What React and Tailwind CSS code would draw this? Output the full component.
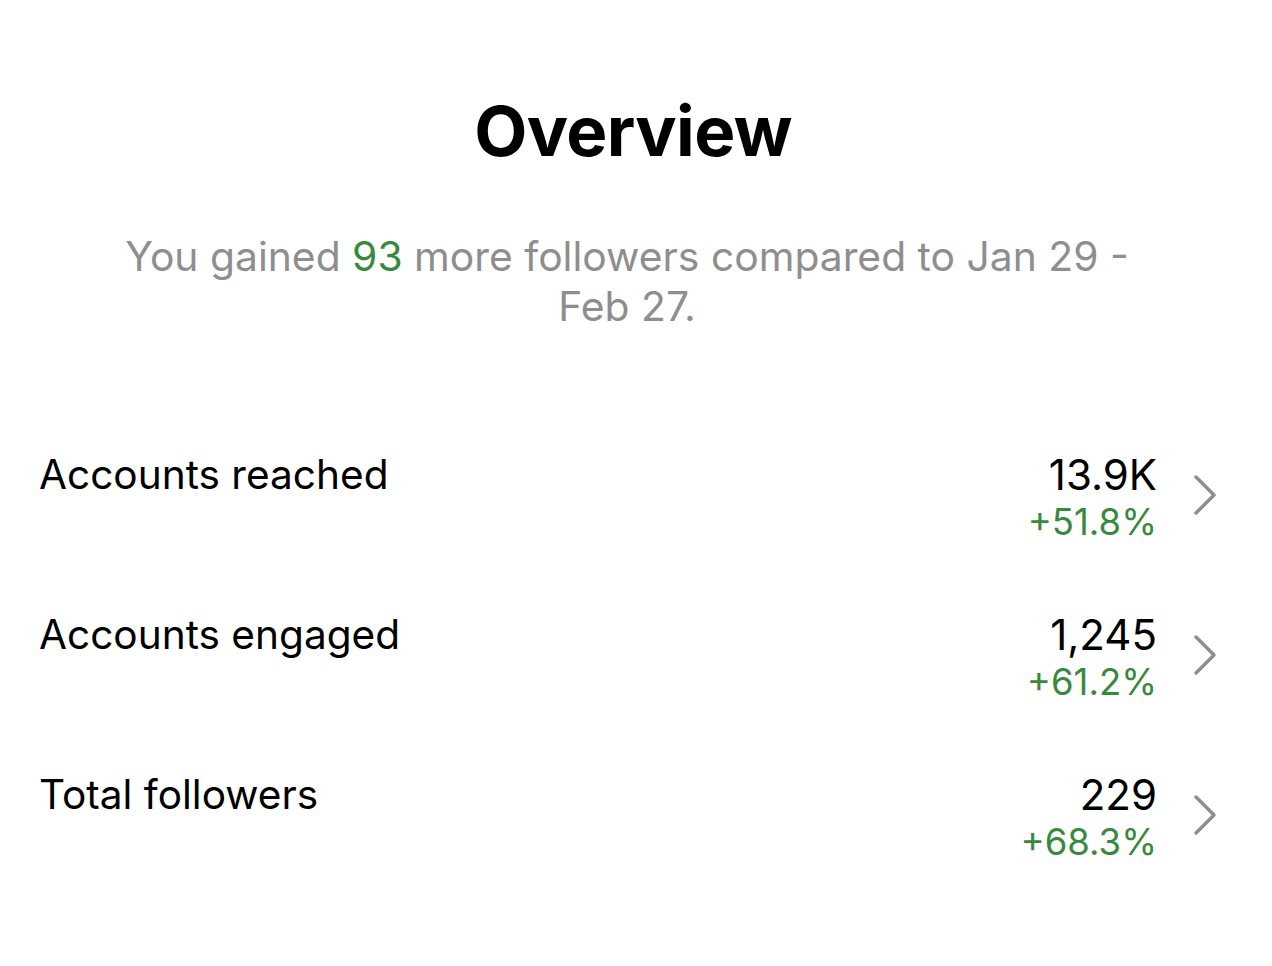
import React from "react";

const rows = [
  { label: "Accounts reached", value: "13.9K", pct: "+51.8%" },
  { label: "Accounts engaged", value: "1,245", pct: "+61.2%" },
  { label: "Total followers", value: "229", pct: "+68.3%" },
];

function Chevron() {
  return (
    <svg width="26" height="42" viewBox="0 0 26 42" fill="none">
      <path d="M4 3 L22 21 L4 39" stroke="#8e8e8e" strokeWidth="3.5" strokeLinecap="round" strokeLinejoin="round" />
    </svg>
  );
}

export default function App() {
  return (
    <div className="w-[1272px] h-[966px] bg-white" style={{ fontFamily: "Inter, 'Noto Sans', sans-serif" }}>
      <div className="pt-[91px] flex flex-col items-center">
        <h1 className="text-[69px] leading-[80px] font-bold text-black tracking-[-0.6px] -translate-x-[3px]">Overview</h1>
        <p className="mt-[60px] mr-[18px] w-[1060px] text-center text-[40.8px] leading-[50px] text-[#8e8e8e]">
          You gained <span className="text-[#378a3c]">93</span> more followers compared to Jan 29 - Feb 27.
        </p>
      </div>
      <div className="mt-[121px] pl-[39px] pr-[40px] flex flex-col gap-[67px]">
        {rows.map((r) => (
          <div key={r.label} className="flex items-start">
            <div className="flex-1 text-[40.6px] leading-[45px] text-black">{r.label}</div>
            <div className="flex flex-col items-end">
              <div className="text-[42px] leading-[45px] text-black">{r.value}</div>
              <div className="mt-[3px] text-[36.5px] leading-[45px] text-[#378a3c]">{r.pct}</div>
            </div>
            <div className="ml-[35px] mt-[22px] mr-[14px]">
              <Chevron />
            </div>
          </div>
        ))}
      </div>
    </div>
  );
}
